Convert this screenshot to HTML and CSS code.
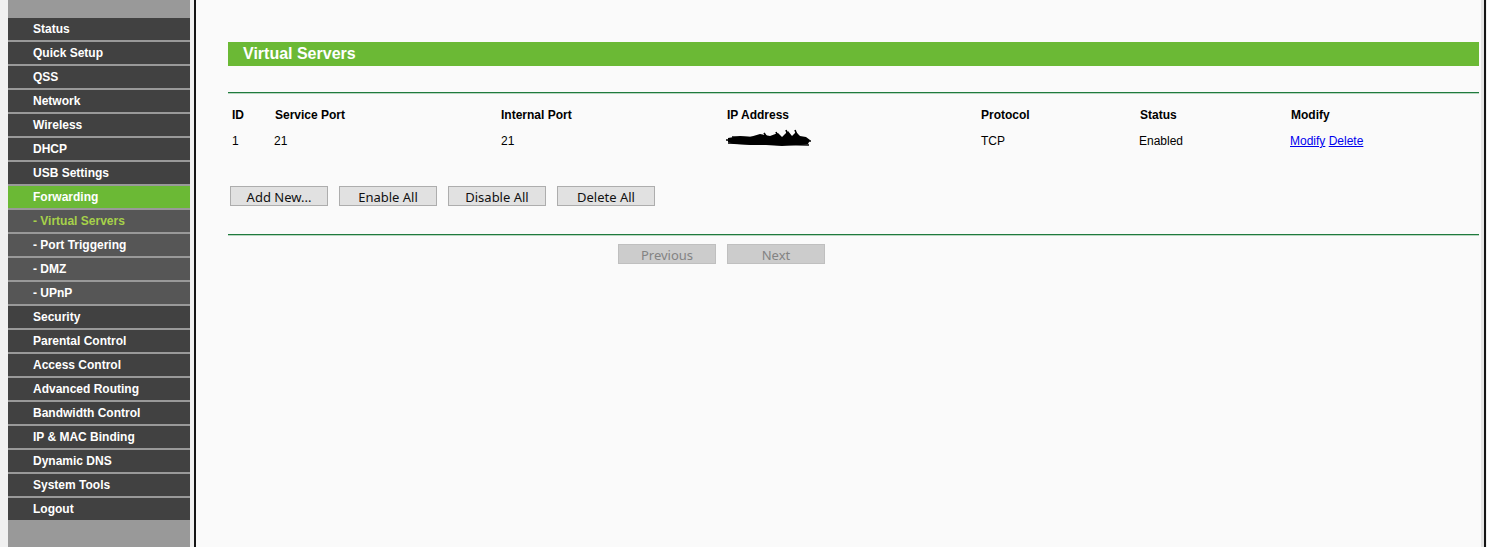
FILE: index.html
```html
<!DOCTYPE html>
<html lang="en">
<head>
    <meta charset="UTF-8">
    <title>Virtual Servers</title>
    <link rel="stylesheet" href="styles.css">
</head>
<body>
    <div class="frame">
        <ul class="menu">
            <li>Status</li>
            <li>Quick Setup</li>
            <li>QSS</li>
            <li>Network</li>
            <li>Wireless</li>
            <li>DHCP</li>
            <li>USB Settings</li>
            <li class="open">Forwarding</li>
            <li class="sub current">- Virtual Servers</li>
            <li class="sub">- Port Triggering</li>
            <li class="sub">- DMZ</li>
            <li class="sub">- UPnP</li>
            <li>Security</li>
            <li>Parental Control</li>
            <li>Access Control</li>
            <li>Advanced Routing</li>
            <li>Bandwidth Control</li>
            <li>IP &amp; MAC Binding</li>
            <li>Dynamic DNS</li>
            <li>System Tools</li>
            <li>Logout</li>
        </ul>
    </div>

    <div class="main">
        <div class="title">Virtual Servers</div>
        <div class="rule top-rule"></div>

        <div class="grid head">
            <span>ID</span>
            <span>Service Port</span>
            <span>Internal Port</span>
            <span>IP Address</span>
            <span>Protocol</span>
            <span>Status</span>
            <span>Modify</span>
        </div>
        <div class="grid row">
            <span>1</span>
            <span>21</span>
            <span>21</span>
            <span class="hidden-ip">
                <!-- scribbled-out address -->
                <svg width="86" height="20" viewBox="0 0 86 20">
                    <path d="M2 9 L14 7 L24 8 L34 5 L44 7 L52 4 L56 8 L62 2 L66 7 L70 3 L74 7 L80 8 L84 11 L82 15 L70 16 L56 17 L40 16 L24 16 L8 15 L2 13 Z" fill="#000"/>
                    <path d="M0 11 L85 12 M2 14 L83 16 M6 8 L76 10 M60 1 L64 12 M69 1 L73 11 M50 3 L54 12 M38 4 L44 13" stroke="#000" stroke-width="1.6" fill="none"/>
                </svg>
            </span>
            <span>TCP</span>
            <span>Enabled</span>
            <span><a href="#">Modify</a> <a href="#">Delete</a></span>
        </div>

        <div class="actions">
            <button>Add New...</button>
            <button>Enable All</button>
            <button>Disable All</button>
            <button>Delete All</button>
        </div>

        <div class="rule bottom-rule"></div>

        <div class="pager">
            <button disabled>Previous</button>
            <button disabled>Next</button>
        </div>
    </div>
</body>
</html>
```

FILE: styles.css
```css
html, body {
    height: 100%;
}
body {
    margin: 0;
    display: flex;
    background-color: #f0f0f0;
    font-family: "Liberation Sans", Arial, sans-serif;
    font-size: 12px;
    overflow: hidden;
}
.frame {
    padding-left: 8px;
    padding-right: 4px;
    width: 182px;
    flex-shrink: 0;
}
.menu {
    list-style: none;
    margin: 0;
    padding: 18px 0 0;
    height: 100%;
    box-sizing: border-box;
    background-color: #999;
}
.menu li {
    height: 22px;
    line-height: 22px;
    margin-bottom: 2px;
    padding-left: 25px;
    background-color: #414141;
    color: #fff;
    font-weight: bold;
}
.menu li.open {
    background-color: #6bb935;
}
.menu li.sub {
    background-color: #565656;
}
.menu li.current {
    color: #a6d14a;
}
.main {
    flex: 1;
    margin-right: 1px;
    background-color: #fafafa;
    border-left: 2px solid #151515;
    border-right: 2px solid #151515;
    box-shadow: inset -3px 0 0 #e4e4e4;
    padding: 42px 5px 0 32px;
}
.title {
    height: 24px;
    line-height: 24px;
    background-color: #6bb935;
    color: #fff;
    font-size: 16px;
    font-weight: bold;
    padding-left: 15px;
}
.rule {
    border-top: 1px solid #1f7a3d;
    border-bottom: 1px solid #b9d6c1;
}
.top-rule {
    margin-top: 26px;
}
.grid {
    display: grid;
    grid-template-columns: 43px 226px 226px 254px 159px 151px 188px;
    padding-left: 4px;
}
.head {
    margin-top: 14px;
    font-weight: bold;
    line-height: 14px;
}
.row {
    margin-top: 12px;
    line-height: 14px;
    height: 14px;
}
.row span:nth-child(2), .row span:nth-child(6), .row span:nth-child(7) {
    margin-left: -1px;
}
.hidden-ip svg {
    display: block;
    margin-top: -5px;
    margin-left: -1px;
}
.row a {
    color: #0000ee;
}
.actions {
    display: flex;
    gap: 11px;
    margin-top: 38px;
    padding-left: 2px;
}
button {
    width: 98px;
    height: 20px;
    padding: 2px 0 0;
    background-color: #e1e1e1;
    border: 1px solid #adadad;
    color: #111;
    font-family: "Noto Sans", "Open Sans", sans-serif;
    font-size: 13px;
    line-height: 16px;
}
.bottom-rule {
    margin-top: 28px;
}
.pager {
    display: flex;
    gap: 11px;
    margin-top: 8px;
    padding-left: 390px;
}
.pager button {
    background-color: #cccccc;
    border-color: #bfbfbf;
    color: #838383;
}
```
